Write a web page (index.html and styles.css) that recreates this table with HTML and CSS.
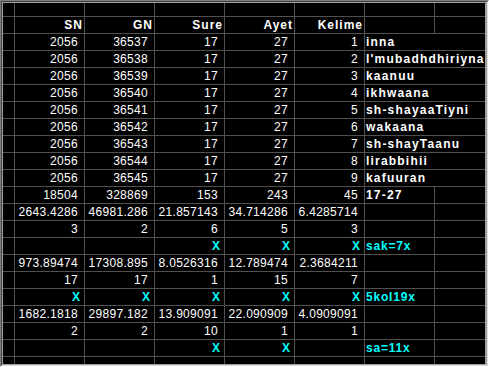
FILE: index.html
```html
<!DOCTYPE html>
<html>
<head>
<meta charset="utf-8">
<link rel="stylesheet" href="styles.css">
</head>
<body>
<div class="frame">
<div class="frame2">
<div class="sheet">
<table class="grid">
<colgroup>
<col class="c-hdr"><col class="c-num"><col class="c-num"><col class="c-num"><col class="c-num"><col class="c-num"><col class="c-num"><col class="c-last">
</colgroup>
<tbody>
<tr class="r-top"><td></td><td></td><td></td><td></td><td></td><td></td><td></td><td class="last"></td></tr>
<tr><td></td><td class="h">SN</td><td class="h">GN</td><td class="h">Sure</td><td class="h">Ayet</td><td class="h">Kelime</td><td></td><td class="last"></td></tr>
<tr><td></td><td class="n">2056</td><td class="n">36537</td><td class="n">17</td><td class="n">27</td><td class="n">1</td><td class="w last" colspan="2">inna</td></tr>
<tr><td></td><td class="n">2056</td><td class="n">36538</td><td class="n">17</td><td class="n">27</td><td class="n">2</td><td class="w last" colspan="2">l'mubadhdhiriyna</td></tr>
<tr><td></td><td class="n">2056</td><td class="n">36539</td><td class="n">17</td><td class="n">27</td><td class="n">3</td><td class="w last" colspan="2">kaanuu</td></tr>
<tr><td></td><td class="n">2056</td><td class="n">36540</td><td class="n">17</td><td class="n">27</td><td class="n">4</td><td class="w last" colspan="2">ikhwaana</td></tr>
<tr><td></td><td class="n">2056</td><td class="n">36541</td><td class="n">17</td><td class="n">27</td><td class="n">5</td><td class="w last" colspan="2">sh-shayaaTiyni</td></tr>
<tr><td></td><td class="n">2056</td><td class="n">36542</td><td class="n">17</td><td class="n">27</td><td class="n">6</td><td class="w last" colspan="2">wakaana</td></tr>
<tr><td></td><td class="n">2056</td><td class="n">36543</td><td class="n">17</td><td class="n">27</td><td class="n">7</td><td class="w last" colspan="2">sh-shayTaanu</td></tr>
<tr><td></td><td class="n">2056</td><td class="n">36544</td><td class="n">17</td><td class="n">27</td><td class="n">8</td><td class="w last" colspan="2">lirabbihii</td></tr>
<tr><td></td><td class="n">2056</td><td class="n">36545</td><td class="n">17</td><td class="n">27</td><td class="n">9</td><td class="w last" colspan="2">kafuuran</td></tr>
<tr><td></td><td class="n">18504</td><td class="n">328869</td><td class="n">153</td><td class="n">243</td><td class="n">45</td><td class="w">17-27</td><td class="last"></td></tr>
<tr><td></td><td class="n">2643.4286</td><td class="n">46981.286</td><td class="n">21.857143</td><td class="n">34.714286</td><td class="n">6.4285714</td><td></td><td class="last"></td></tr>
<tr><td></td><td class="n">3</td><td class="n">2</td><td class="n">6</td><td class="n">5</td><td class="n">3</td><td></td><td class="last"></td></tr>
<tr><td></td><td></td><td></td><td class="x">X</td><td class="x">X</td><td class="x">X</td><td class="cw">sak=7x</td><td class="last"></td></tr>
<tr><td></td><td class="n">973.89474</td><td class="n">17308.895</td><td class="n">8.0526316</td><td class="n">12.789474</td><td class="n">2.3684211</td><td></td><td class="last"></td></tr>
<tr><td></td><td class="n">17</td><td class="n">17</td><td class="n">1</td><td class="n">15</td><td class="n">7</td><td></td><td class="last"></td></tr>
<tr><td></td><td class="x">X</td><td class="x">X</td><td class="x">X</td><td class="x">X</td><td class="x">X</td><td class="cw">5kol19x</td><td class="last"></td></tr>
<tr><td></td><td class="n">1682.1818</td><td class="n">29897.182</td><td class="n">13.909091</td><td class="n">22.090909</td><td class="n">4.0909091</td><td></td><td class="last"></td></tr>
<tr><td></td><td class="n">2</td><td class="n">2</td><td class="n">10</td><td class="n">1</td><td class="n">1</td><td></td><td class="last"></td></tr>
<tr><td></td><td></td><td></td><td class="x">X</td><td class="x">X</td><td></td><td class="cw">sa=11x</td><td class="last"></td></tr>
<tr class="r-bottom"><td></td><td></td><td></td><td></td><td></td><td></td><td></td><td class="last"></td></tr>
</tbody>
</table>
</div>
</div>
</div>
</body>
</html>
```

FILE: styles.css
```css
html, body {
  margin: 0;
  padding: 0;
  background: #ffffff;
}

.frame {
  width: 489px;
  height: 367px;
  box-sizing: border-box;
  border-style: solid;
  border-width: 1px;
  border-color: #808080 #ffffff #ffffff #808080;
}

.frame2 {
  box-sizing: border-box;
  height: 365px;
  border-style: solid;
  border-width: 1px;
  border-color: #404040 #e0e0e0 #e0e0e0 #404040;
}

.sheet {
  box-sizing: border-box;
  height: 363px;
  background: #000000;
  border-style: solid;
  border-color: #a0a0a0;
  border-width: 1px 2px 1px 1px;
}

.grid {
  table-layout: fixed;
  border-collapse: separate;
  border-spacing: 0;
  width: 482px;
  font-family: "Liberation Sans", Arial, sans-serif;
  font-size: 12px;
  line-height: 16px;
  color: #ffffff;
}

.c-hdr { width: 12px; }
.c-num { width: 70px; }
.c-last { width: 50px; }

.grid td {
  box-sizing: border-box;
  height: 17px;
  padding: 0;
  border-right: 1px solid #505050;
  border-bottom: 1px solid #505050;
  white-space: nowrap;
  overflow: visible;
  vertical-align: middle;
}

.grid td.last {
  border-right: none;
}

.grid .r-top td {
  height: 14px;
}

.grid .r-bottom td {
  height: 7px;
  border-bottom: none;
}

.grid td.n {
  text-align: right;
  padding-right: 6px;
  letter-spacing: 0.3px;
}

.grid td.h {
  text-align: right;
  padding-right: 1px;
  font-weight: bold;
  letter-spacing: 1px;
}

.grid td.x {
  text-align: right;
  padding-right: 4px;
  font-weight: bold;
  color: #00ffff;
}

.grid td.w {
  text-align: left;
  padding-left: 1px;
  font-weight: bold;
  letter-spacing: 1.2px;
}

.grid td.cw {
  text-align: left;
  padding-left: 1px;
  font-weight: bold;
  letter-spacing: 0.8px;
  color: #00ffff;
}
```
